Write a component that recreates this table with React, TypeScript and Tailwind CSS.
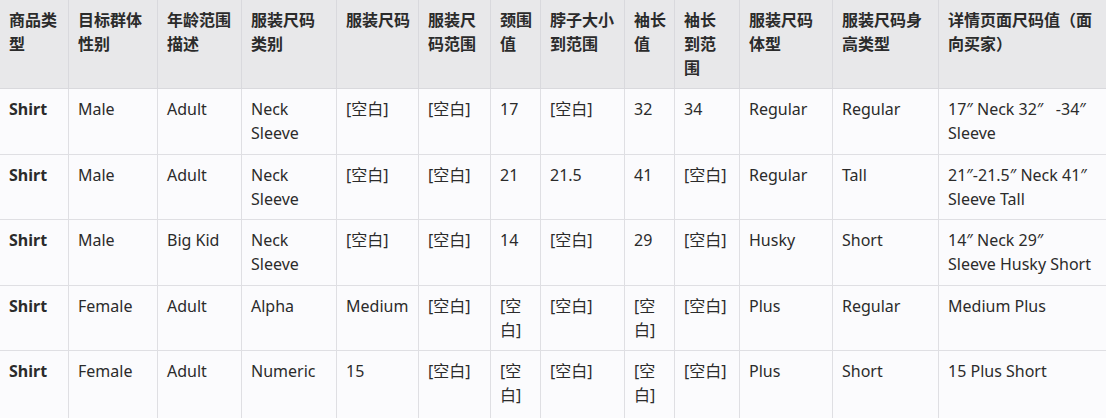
import React from "react";

const headers = [
  "商品类型",
  "目标群体性别",
  "年龄范围描述",
  "服装尺码类别",
  "服装尺码",
  "服装尺码范围",
  "颈围值",
  "脖子大小到范围",
  "袖长值",
  "袖长到范围",
  "服装尺码体型",
  "服装尺码身高类型",
  "详情页面尺码值（面向买家）",
];

const B = "[空白]";

const rows: (string | string[])[][] = [
  ["Shirt", "Male", "Adult", "Neck Sleeve", B, B, "17", B, "32", "34", "Regular", "Regular", ["17\u2033 Neck 32\u2033\u00a0\u00a0 -34\u2033", "Sleeve"]],
  ["Shirt", "Male", "Adult", "Neck Sleeve", B, B, "21", "21.5", "41", B, "Regular", "Tall", ["21\u2033-21.5\u2033 Neck 41\u2033", "Sleeve Tall"]],
  ["Shirt", "Male", "Big Kid", "Neck Sleeve", B, B, "14", B, "29", B, "Husky", "Short", ["14\u2033 Neck 29\u2033", "Sleeve Husky Short"]],
  ["Shirt", "Female", "Adult", "Alpha", "Medium", B, B, B, B, B, "Plus", "Regular", "Medium Plus"],
  ["Shirt", "Female", "Adult", "Numeric", "15", B, B, B, B, B, "Plus", "Short", "15 Plus Short"],
];

export default function App() {
  return (
    <div
      className="w-[1106px] h-[418px] overflow-hidden bg-[#fbfbfd] text-[16px] leading-6 text-[#2b2b2b]"
      style={{ fontFamily: '"Noto Sans", "Noto Sans CJK SC", sans-serif' }}
    >
      <div className="grid grid-cols-[69px_89px_84px_95px_82px_72px_50px_84px_50px_65px_93px_106px_167px] grid-rows-[89px_66px_65px_66px_65px_80px]">
        {headers.map((h, i) => (
          <div
            key={"h" + i}
            className={
              "bg-[#e8e8ea] border-b border-[#d9d9dd] pt-2 pl-[9px] pr-[8px] font-bold break-all " +
              (i < 12 ? "border-r" : "")
            }
          >
            {h}
          </div>
        ))}
        {rows.map((r, ri) =>
          r.map((c, ci) => (
            <div
              key={ri + "-" + ci}
              className={
                "border-b border-[#dfdfe3] pt-2 pl-[9px] pr-[8px] " +
                (ci < 12 ? "border-r " : "") +
                (ci === 0 ? "font-bold" : "")
              }
            >
              {Array.isArray(c)
                ? c.map((line, li) => (
                    <div key={li} className="whitespace-nowrap">
                      {line}
                    </div>
                  ))
                : c}
            </div>
          ))
        )}
      </div>
    </div>
  );
}
